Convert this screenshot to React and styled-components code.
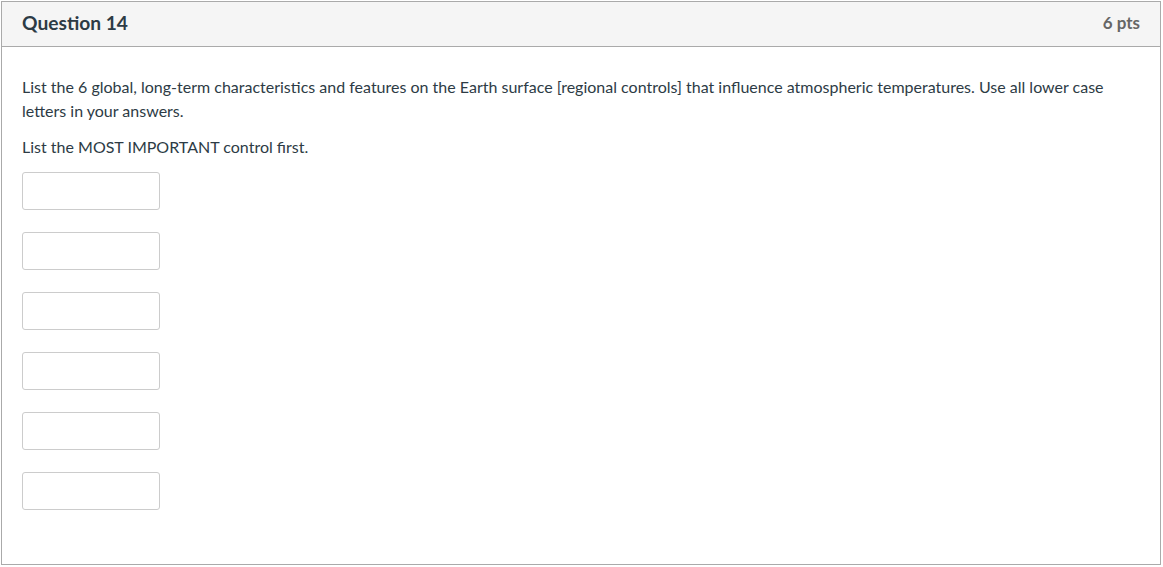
import React from 'react';
import styled, { createGlobalStyle } from 'styled-components';

const GlobalStyle = createGlobalStyle`
  body {
    margin: 0;
    background: #fff;
    font-family: Lato, 'Noto Sans', sans-serif;
    color: #2d3b45;
  }
`;

const StyledQuestion = styled.div`
  margin: 1px 0 0 1px;
  width: 1160px;
  height: 564px;
  box-sizing: border-box;
  border: 1px solid #aaaaaa;
  display: flex;
  flex-direction: column;
`;

const StyledHeader = styled.div`
  height: 45px;
  box-sizing: border-box;
  background: #f5f5f5;
  border-bottom: 1px solid #aaaaaa;
  display: flex;
  align-items: center;
  justify-content: space-between;
  padding: 0 20px 3px;
`;

const StyledTitle = styled.h2`
  margin: 0;
  font-size: 19.2px;
  font-weight: 700;
  color: #2d3b45;
`;

const StyledPoints = styled.span`
  font-size: 17px;
  font-weight: 700;
  color: #666666;
`;

const StyledBody = styled.div`
  padding: 28px 20px 0;
`;

const StyledText = styled.p`
  margin: 0 0 12px;
  font-size: 16px;
  line-height: 24px;
`;

const StyledAnswers = styled.div`
  display: flex;
  flex-direction: column;
  gap: 22px;
  padding-top: 1px;
`;

const StyledInput = styled.input`
  width: 138px;
  height: 38px;
  box-sizing: border-box;
  border: 1px solid #cccccc;
  border-radius: 3px;
  background: #fff;
  padding: 4px 6px;
  font-family: Lato, sans-serif;
  font-size: 16px;

  :focus {
    outline: none;
  }
`;

const App = () => (
  <>
    <GlobalStyle />
    <StyledQuestion>
      <StyledHeader>
        <StyledTitle>Question 14</StyledTitle>
        <StyledPoints>6 pts</StyledPoints>
      </StyledHeader>
      <StyledBody>
        <StyledText>
          List the 6 global, long-term characteristics and features on the Earth surface [regional controls] that
          influence atmospheric temperatures. Use all lower case letters in your answers.
        </StyledText>
        <StyledText>List the MOST IMPORTANT control first.</StyledText>
        <StyledAnswers>
          {[1, 2, 3, 4, 5, 6].map((n) => (
            <StyledInput key={n} type="text" aria-label={`answer ${n}`} />
          ))}
        </StyledAnswers>
      </StyledBody>
    </StyledQuestion>
  </>
);

export default App;
